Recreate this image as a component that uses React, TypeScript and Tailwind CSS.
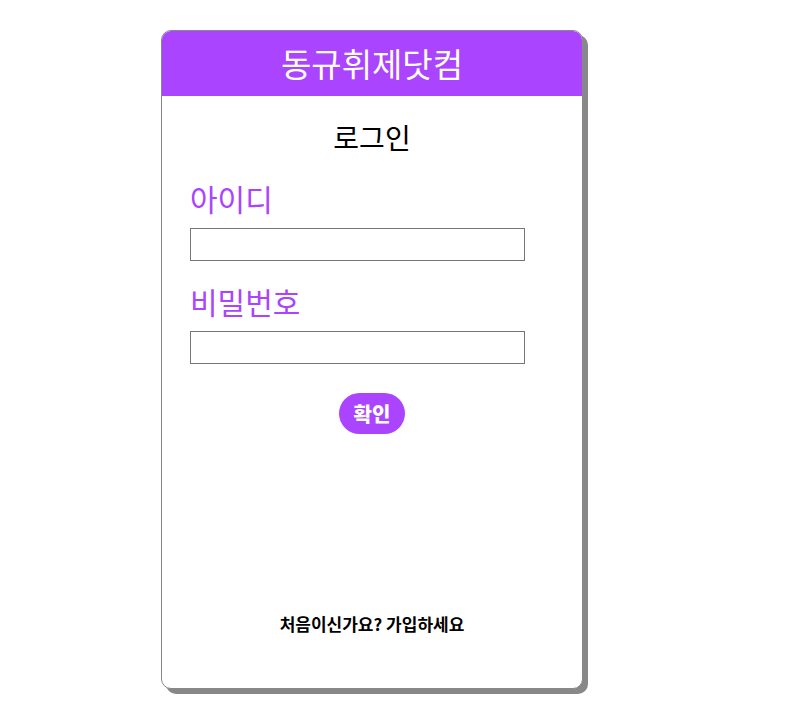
export default function App() {
  const font = { fontFamily: '"Noto Sans CJK KR", "Noto Sans", sans-serif' };
  return (
    <div className="min-h-[711px] bg-white pl-[161px] pt-[30px]" style={font}>
      <div className="flex h-[659px] w-[422px] flex-col overflow-hidden rounded-[10px] border border-[#888] bg-white shadow-[5px_5px_0_#888]">
        <div className="flex h-[65px] shrink-0 items-center justify-center bg-[#aa44ff] text-[33px] text-white">
          동규휘제닷컴
        </div>
        <div className="flex flex-1 flex-col px-[28px]">
          <h2 className="mt-[21px] text-center text-[28px] leading-[40px] text-black">로그인</h2>
          <label className="mt-[21px] text-[30px] leading-[40px] text-[#aa44ff]">아이디</label>
          <input className="mt-[10px] h-[33px] w-[335px] border border-[#767676] px-1 outline-none" />
          <label className="mt-[20px] text-[30px] leading-[40px] text-[#aa44ff]">비밀번호</label>
          <input type="password" className="mt-[10px] h-[33px] w-[335px] border border-[#767676] px-1 outline-none" />
          <div className="mt-[29px] flex justify-center">
            <button className="h-[41px] w-[66px] rounded-full bg-[#aa44ff] text-[20px] font-black text-white">
              확인
            </button>
          </div>
          <p className="mt-auto mb-[52px] text-center text-[17px] font-bold text-black">처음이신가요? 가입하세요</p>
        </div>
      </div>
    </div>
  );
}
